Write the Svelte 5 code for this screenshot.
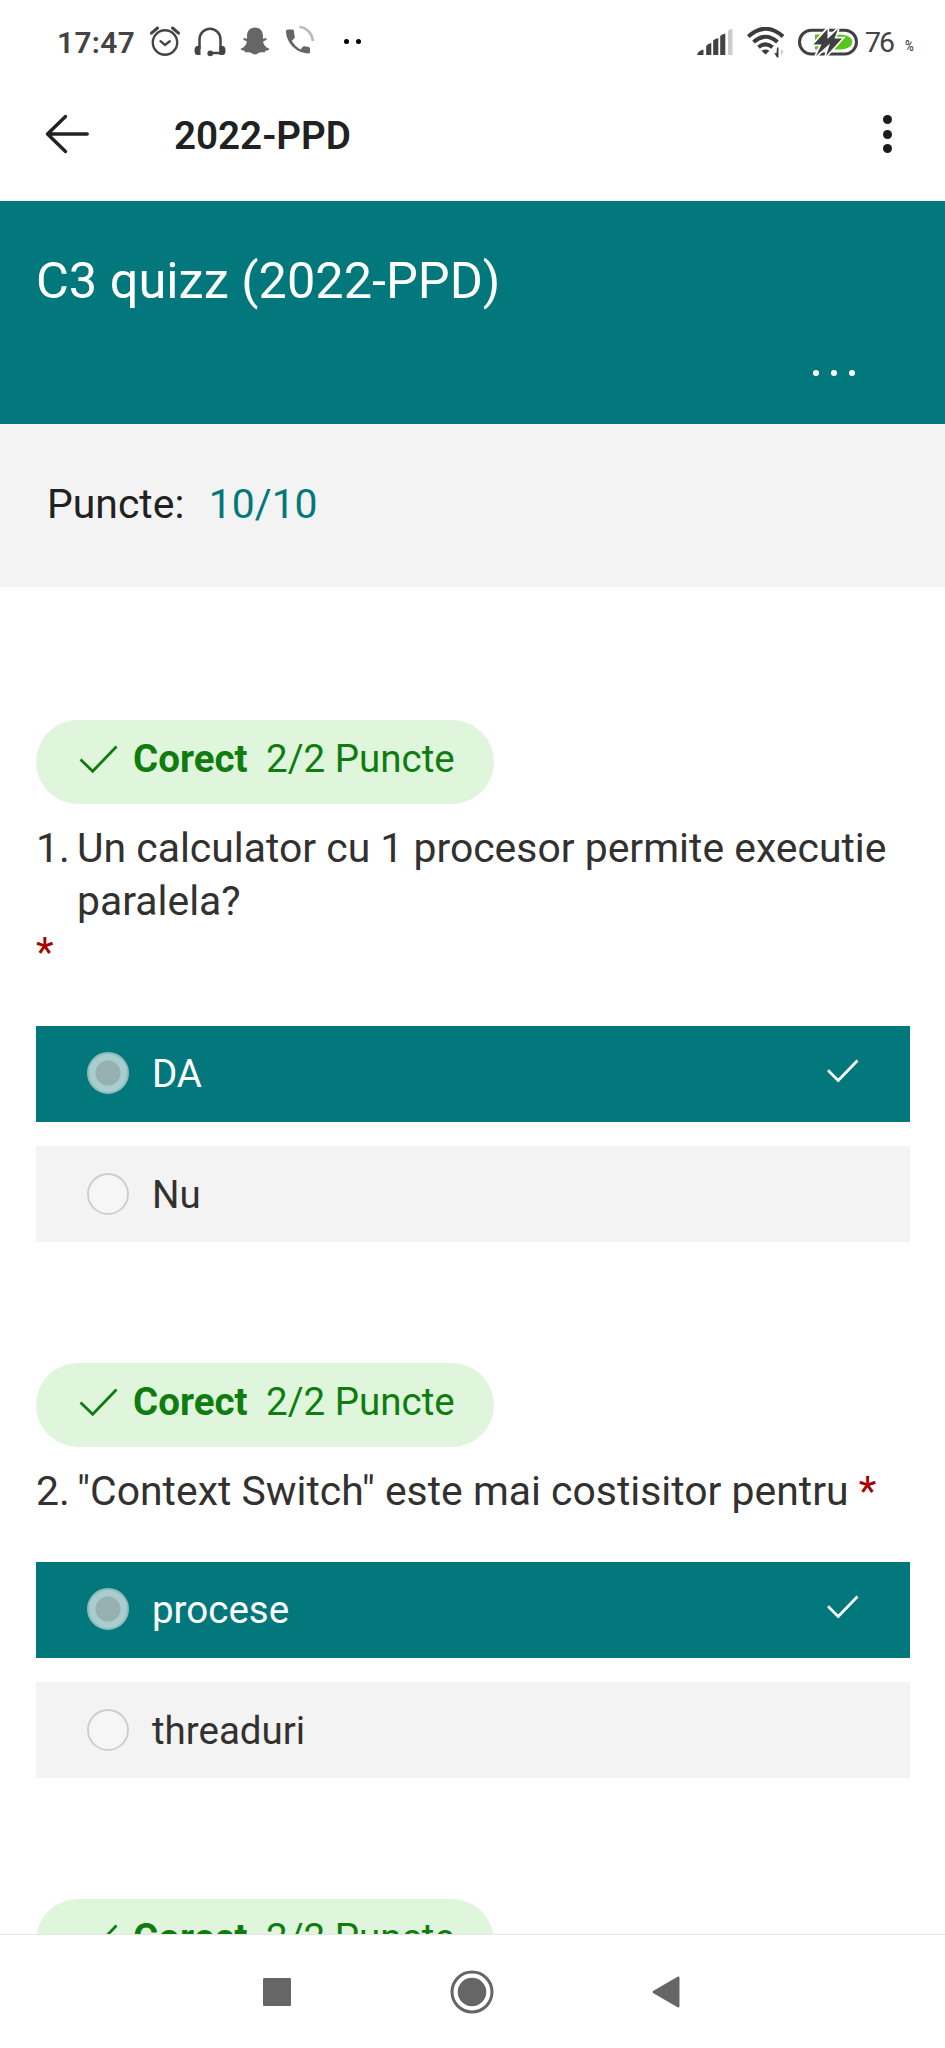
<script>
  const questions = [
    {
      number: '1.',
      text: 'Un calculator cu 1 procesor permite executie paralela?',
      starBelow: true,
      options: [
        { label: 'DA', selected: true },
        { label: 'Nu', selected: false }
      ]
    },
    {
      number: '2.',
      text: '"Context Switch" este mai costisitor pentru',
      starBelow: false,
      options: [
        { label: 'procese', selected: true },
        { label: 'threaduri', selected: false }
      ]
    }
  ];
</script>

{#snippet badge()}
  <div class="badge">
    <svg class="tick" width="40" height="30" viewBox="0 0 40 30">
      <path d="M1.5 15.5 L13.7 27.3 L37.5 2.5" fill="none" stroke="#107c10" stroke-width="2.8" />
    </svg>
    <b>Corect</b>
    <span>2/2 Puncte</span>
  </div>
{/snippet}

<div class="screen">
  <div class="status">
    <span class="time">17:47</span>
    <svg class="alarm" width="30" height="30" viewBox="0 0 30 30" fill="none" stroke="#444" stroke-width="2.4" stroke-linecap="round">
      <circle cx="15" cy="16.5" r="12.2" />
      <path d="M10.5 15.2 L15 19 L19.8 15.2" />
      <path d="M1.5 7.2 L7.5 2 M22.5 2 L28.5 7.2" stroke-width="3" />
    </svg>
    <svg class="head" width="32" height="30" viewBox="0 0 32 30">
      <path d="M5.5 22 V12.5 A10.5 10.8 0 0 1 26.5 12.5 V26 H16" fill="none" stroke="#444" stroke-width="2.5" />
      <path d="M6.5 19 V28 H3.5 Q.5 28 .5 23.5 Q.5 19 3.5 19Z M25.5 19 V28 H28.5 Q31.5 28 31.5 23.5 Q31.5 19 28.5 19Z" fill="#444" />
      <circle cx="16.3" cy="26.3" r="2.9" fill="#444" />
    </svg>
    <svg class="snap" width="30" height="28" viewBox="0 0 30 28">
      <path d="M15 .5 C20 .5 23 4 23 9 V11.8 L26 11 Q27.5 12 26 13 L23 14.8 C24 18.5 26 20.5 29.3 21.8 Q29.5 23 25.5 23.8 L24.5 25.5 C21 25 19 25.5 17.5 26.8 Q15 28.3 12.5 26.8 C11 25.5 9 25 5.5 25.5 L4.5 23.8 Q.5 23 .7 21.8 C4 20.5 6 18.5 7 14.8 L4 13 Q2.5 12 4 11 L7 11.8 V9 C7 4 10 .5 15 .5Z" fill="#666" />
    </svg>
    <svg class="call" width="30" height="30" viewBox="0 0 30 30">
      <path d="M2.5 4.5 H7.5 Q9 4.5 9 6 Q9 9 9.8 11.5 Q10 12.6 9.2 13.4 L6.8 15.8 Q10 21.5 15.5 24.5 L17.8 21.8 Q18.6 21 19.7 21.3 L23.5 22 Q25 22.2 25 23.7 V27 Q25 28.6 23.5 28.5 C11 28 1 17.5 1 6 Q1 4.5 2.5 4.5Z" fill="#666" />
      <path d="M14.5 1.7 A15.5 15.5 0 0 1 27.8 16" fill="none" stroke="#bbb" stroke-width="2.6" />
    </svg>
    <span class="dots"><i></i><i></i></span>
    <svg class="signal" width="36" height="27" viewBox="0 0 36 27" fill="#424242">
      <path d="M0 26 Q1 21.5 6.5 20.5 V26Z M9.2 17 Q11 14.5 14.3 14 V26 H9.2Z M16.2 11.5 Q18 9.5 21.3 9 V26 H16.2Z M23.2 7 Q25 5 28.3 4.5 V26 H23.2Z" />
      <path d="M31 1.5 Q33 .2 35.5 0 V26 H31Z" fill="#ccc" />
    </svg>
    <svg class="wifi" width="38" height="32" viewBox="0 0 38 32">
      <g fill="none" stroke="#3c3c3c" stroke-width="4">
        <path d="M1.3 9.5 Q18.5 -6 36 9.5" />
        <path d="M6.5 15 Q18.5 4.5 30.5 15" />
        <path d="M11.5 20.3 Q18.5 14.3 25.5 20.3" />
      </g>
      <path d="M14.5 23.8 Q18.5 21 22.5 23.8 L18.5 27.5Z" fill="#3c3c3c" />
      <path d="M31.5 20.5 V30.5 H30 L27.3 26 H29.5 L30 20.5Z" fill="#3c3c3c" />
      <path d="M34 22 V29 L36.5 24.5Z" fill="#ccc" />
    </svg>
    <svg class="battery" width="61" height="30" viewBox="0 0 61 30">
      <path d="M17 7.5 H43 Q53.5 8 54.5 15 Q53.5 22 43 22.5 H17Z" fill="#5ac41e" />
      <rect x="1.5" y="3.2" width="57" height="23.8" rx="11.9" fill="none" stroke="#404040" stroke-width="3" />
      <path d="M29.5 2 L15.5 17.5 H23.5 L18 29 L32 16.5 L28 29 L44 11.5 H36.5 L40 2 L29.5 12Z" fill="#404040" stroke="#fff" stroke-width="3.4" paint-order="stroke" />
    </svg>
    <span class="level">76</span>
    <span class="percent">%</span>
  </div>

  <header class="appbar">
    <svg class="back" width="46" height="40" viewBox="0 0 46 40" fill="none" stroke="#212121" stroke-width="3.4" stroke-linecap="round" stroke-linejoin="round">
      <path d="M43.2 20 H3.5 M21.5 2.5 L3.5 20 L21.5 37.5" />
    </svg>
    <h1>2022-PPD</h1>
    <div class="kebab"><i></i><i></i><i></i></div>
  </header>

  <main>
    <section class="banner">
      <h2>C3 quizz (2022-PPD)</h2>
      <div class="more"><i></i><i></i><i></i></div>
    </section>

    <section class="score">
      <span>Puncte:</span>
      <span class="value">10/10</span>
    </section>

    <div class="list">
      {#each questions as q}
        <article class:tall={q.starBelow}>
          {@render badge()}
          <div class="question">
            <span class="num">{q.number}</span>
            <p>{q.text}{#if !q.starBelow}&nbsp;<span class="star">*</span>{/if}</p>
          </div>
          {#if q.starBelow}<div class="star below">*</div>{/if}
          <div class="options">
            {#each q.options as o}
              <div class="option" class:selected={o.selected}>
                <span class="radio"></span>
                <span class="label">{o.label}</span>
                {#if o.selected}
                  <svg width="34" height="26" viewBox="0 0 34 26">
                    <path d="M2 12.2 L12.2 22.5 L31.5 2.5" fill="none" stroke="#fff" stroke-width="2.7" />
                  </svg>
                {/if}
              </div>
            {/each}
          </div>
        </article>
      {/each}
      {@render badge()}
    </div>
  </main>

  <nav>
    <svg width="28" height="28" viewBox="0 0 28 28"><rect width="28" height="28" rx="1.2" fill="#666" /></svg>
    <svg width="44" height="44" viewBox="0 0 44 44">
      <circle cx="22" cy="22" r="20" fill="none" stroke="#666" stroke-width="3" />
      <circle cx="22" cy="22" r="14.3" fill="#666" />
    </svg>
    <svg width="28" height="32" viewBox="0 0 28 32"><path d="M25.5 .8 Q27.5 0 27.5 2 V30 Q27.5 32 25.5 31.2 L1 17 Q0 16 1 15Z" fill="#666" /></svg>
  </nav>
</div>

<style>
  :global(body) { background: #fff; }
  .screen {
    width: 945px;
    height: 2048px;
    overflow: hidden;
    display: flex;
    flex-direction: column;
    background: #fff;
    font-family: Roboto, sans-serif;
    font-size: 38.5px;
    color: #323130;
  }
  svg { display: block; flex: none; }
  h1, h2, p { margin: 0; font-weight: 400; }
  i { display: block; border-radius: 50%; }

  .status {
    flex: none;
    height: 84px;
    box-sizing: border-box;
    padding-left: 57px;
    display: flex;
    align-items: center;
    color: #444;
  }
  .time { width: 93px; margin-top: 1px; font-size: 29.8px; font-weight: 600; letter-spacing: 0.4px; }
  .alarm { margin-top: -2px; }
  .head { margin: 0 0 0 14px; }
  .snap { margin: 0 0 2px 14px; }
  .call { margin: -4px 0 0 15px; }
  .dots { display: flex; gap: 7px; margin: 0 0 1px 29px; }
  .dots i { width: 5px; height: 5px; background: #000; }
  .signal { margin: 0 0 0 336px; }
  .wifi { margin: 2px 0 0 14px; }
  .battery { margin: 0 0 0 13px; }
  .level { margin: 1px 0 0 6px; font-size: 28.5px; width: 39.5px; letter-spacing: -2px; }
  .percent { font-size: 15px; font-weight: 500; margin-top: 8px; transform: scaleX(0.8); transform-origin: left; }

  .appbar {
    flex: none;
    height: 117.3px;
    display: flex;
    align-items: flex-start;
    color: #212121;
  }
  .back { margin: 30px 0 0 44px; }
  h1 { margin: 29px 0 0 84px; font-size: 38.6px; line-height: 46px; font-weight: 600; }
  .kebab { margin: 31px 53.5px 0 auto; display: grid; gap: 5.6px; }
  .kebab i { width: 9px; height: 9px; background: #1b1b1b; }

  main { flex: 1; min-height: 0; overflow: hidden; }
  .banner {
    height: 222.7px;
    box-sizing: border-box;
    padding: 49px 90px 0 36px;
    background: #03787c;
    color: #fff;
  }
  h2 { font-size: 50.5px; line-height: 62px; white-space: nowrap; }
  .more { display: flex; justify-content: flex-end; gap: 11.5px; margin-top: 57.5px; }
  .more i { width: 6.5px; height: 6.5px; background: #fff; }
  .score {
    height: 162.6px;
    box-sizing: border-box;
    padding: 0 0 2px 47px;
    display: flex;
    align-items: center;
    gap: 24.5px;
    background: #f3f3f3;
    color: #212121;
    font-size: 40.9px;
  }
  .score .value { color: #03787c; }

  .list { padding: 133px 35px 0 36px; }
  .badge {
    width: 457.5px;
    height: 84px;
    box-sizing: border-box;
    padding: 0 0 6px 43px;
    border-radius: 42px;
    background: #dff6dd;
    color: #107c10;
    display: flex;
    align-items: center;
    white-space: nowrap;
  }
  .tick { margin-top: 1px; }
  .badge b { margin-left: 14px; width: 133px; }
  article { height: 536px; }
  article.tall { height: 643.4px; }
  .question {
    display: flex;
    margin-top: 18px;
    font-size: 40.9px;
    line-height: 53px;
  }
  .tall .question { margin-top: 18.8px; }
  .num { flex: none; width: 41px; }
  .question p { flex: 1; }
  .star { color: #a80000; }
  .below { font-size: 40.9px; line-height: 48px; }
  .options { margin-top: 44.4px; display: grid; gap: 24px; }
  .tall .options { margin-top: 49.8px; }
  .option {
    height: 96px;
    box-sizing: border-box;
    padding: 0 50px 0 51px;
    display: flex;
    align-items: center;
    background: #f3f3f3;
  }
  .radio {
    width: 42px;
    height: 42px;
    box-sizing: border-box;
    border: 2px solid #cecece;
    border-radius: 50%;
    background: #f6f6f6;
  }
  .label { flex: 1; margin-left: 23px; }
  .selected { padding-bottom: 2px; background: #03787c; color: #fff; }
  .selected .radio {
    border-color: #93b9bb;
    background: radial-gradient(circle, #96b0b2 12px, #a7cdcf 13px);
  }
  .option svg { margin-bottom: 5px; }

  nav {
    flex: none;
    height: 114px;
    box-sizing: border-box;
    border-top: 1px solid #e6e6e6;
    padding-left: 262.5px;
    display: flex;
    align-items: center;
  }
  nav svg:nth-child(2) { margin-left: 159.5px; }
  nav svg:nth-child(3) { margin-left: 157.5px; }
</style>
